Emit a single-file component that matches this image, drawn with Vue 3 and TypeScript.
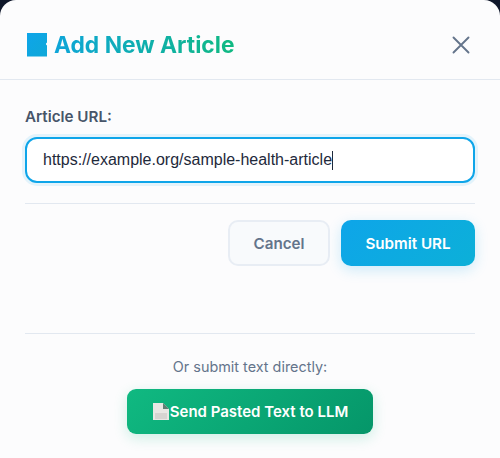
<script setup lang="ts">
const url: string = "https://example.org/sample-health-article";
</script>

<template>
  <div class="modal">
    <header class="head">
      <h2 class="title">
        <svg class="note" width="22" height="24" viewBox="0 0 22 24" aria-hidden="true">
          <defs>
            <linearGradient id="noteFill" x1="0" y1="0" x2="1" y2="1">
              <stop offset="0" stop-color="#0ea5e9" />
              <stop offset="1" stop-color="#0fa8d8" />
            </linearGradient>
          </defs>
          <path d="M1 0h20v9.5l-1 1v1l1 1V23.5H1z" fill="url(#noteFill)" />
        </svg>
        <span class="title-text">Add New Article</span>
      </h2>
      <button class="close" type="button" aria-label="Close">
        <svg width="18" height="18" viewBox="0 0 18 18" fill="none" stroke="#64748b" stroke-width="1.9" stroke-linecap="round">
          <path d="M1.5 1.5l15 15M16.5 1.5l-15 15" />
        </svg>
      </button>
    </header>

    <div class="body">
      <label class="label">Article URL:</label>
      <div class="input"><span>{{ url }}</span><i class="caret"></i></div>

      <div class="actions">
        <button class="btn cancel" type="button">Cancel</button>
        <button class="btn submit" type="button">Submit URL</button>
      </div>

      <div class="direct">
        <p class="hint">Or submit text directly:</p>
        <button class="btn send" type="button">
          <svg width="18" height="19" viewBox="0 0 18 19" aria-hidden="true">
            <path d="M1 1h10l6 6v11H1z" fill="#e9e7e4" />
            <path d="M3 11h12v6H3z" fill="#d6d4d1" />
            <path d="M11 1l6 6h-6z" fill="#5f7f74" />
          </svg>
          <span>Send Pasted Text to LLM</span>
        </button>
      </div>
    </div>
  </div>
</template>

<style scoped>
.modal {
  width: 500px;
  height: 458px;
  box-sizing: border-box;
  background: #fcfcfd;
  border-radius: 16px 16px 0 0;
  font-family: Inter, "Liberation Sans", sans-serif;
  display: flex;
  flex-direction: column;
}
.head {
  height: 80px;
  box-sizing: border-box;
  padding: 10px 30px 0 26px;
  display: flex;
  align-items: center;
  justify-content: space-between;
  border-bottom: 1px solid #e2e8f0;
}
.title {
  margin: 0;
  display: flex;
  align-items: center;
  gap: 6px;
  font-size: 22.8px;
  font-weight: 700;
  line-height: 28px;
}
.note {
  flex: none;
}
.title-text {
  background: linear-gradient(90deg, #0ea5d9 0%, #10b981 100%);
  -webkit-background-clip: text;
  background-clip: text;
  color: transparent;
}
.close {
  width: 18px;
  height: 18px;
  padding: 0;
  border: 0;
  background: none;
  display: flex;
}
.body {
  flex: 1;
  padding: 28px 25px 0;
  display: flex;
  flex-direction: column;
}
.label {
  font-size: 15.2px;
  font-weight: 600;
  line-height: 18px;
  color: #475569;
  margin-bottom: 11px;
}
.input {
  height: 46px;
  box-sizing: border-box;
  padding: 0 16px;
  display: flex;
  align-items: center;
  background: #fff;
  border: 2px solid #0ea5e9;
  border-radius: 12px;
  box-shadow: 0 0 0 3px rgba(14, 165, 233, 0.1);
  font-family: "Liberation Sans", Arial, sans-serif;
  font-size: 16px;
  color: #1e293b;
}
.caret {
  width: 1px;
  height: 19px;
  background: #1e293b;
}
.actions {
  margin-top: 20px;
  padding-top: 16px;
  border-top: 1px solid #e2e8f0;
  display: flex;
  justify-content: flex-end;
  gap: 11px;
}
.btn {
  height: 46px;
  box-sizing: border-box;
  border-radius: 10px;
  font-family: inherit;
  font-size: 15.2px;
  font-weight: 600;
  padding: 0;
}
.cancel {
  width: 102px;
  background: #f8fafc;
  border: 2px solid #e8edf4;
  color: #64748b;
}
.submit {
  width: 134px;
  border: 0;
  color: #fff;
  background: linear-gradient(135deg, #0ea5e9, #0cb0d8);
  box-shadow: 0 4px 14px rgba(14, 165, 233, 0.2);
}
.direct {
  margin-top: 67px;
  padding-top: 24px;
  border-top: 1px solid #e2e8f0;
  display: flex;
  flex-direction: column;
  align-items: center;
}
.hint {
  margin: 0 0 13px;
  font-size: 14.4px;
  line-height: 18px;
  color: #64748b;
}
.send {
  width: 246px;
  height: 45px;
  border: 0;
  border-radius: 9px;
  font-size: 15px;
  color: #fff;
  background: linear-gradient(135deg, #10b981, #059669);
  box-shadow: 0 4px 14px rgba(16, 185, 129, 0.2);
  display: flex;
  align-items: center;
  justify-content: center;
}
</style>

<style>
html, body {
  background: #0f172a;
}
</style>
